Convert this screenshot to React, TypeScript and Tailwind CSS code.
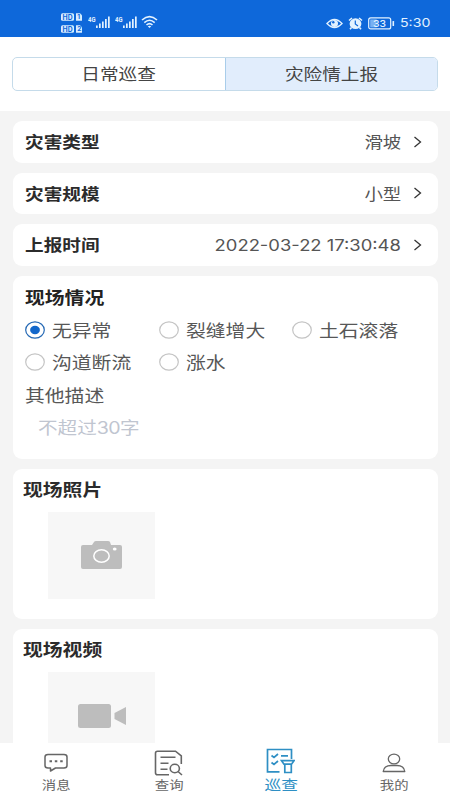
import type { ReactNode } from "react";

function Wide({ children, className = "" }: { children: ReactNode; className?: string }) {
  return <span className={`inline-block whitespace-nowrap scale-x-[1.18] ${className}`}>{children}</span>;
}

function SignalBars() {
  return (
    <svg width="23" height="14" viewBox="0 0 23 14" fill="#e3f2ff">
      <text x="0" y="6.5" fontSize="7" fontWeight="700" fontFamily="Roboto, sans-serif" textLength="7.5" lengthAdjust="spacingAndGlyphs">4G</text>
      <rect x="8" y="10.5" width="1.7" height="2.5" />
      <rect x="11" y="8.5" width="1.7" height="4.5" />
      <rect x="14" y="6.5" width="1.7" height="6.5" />
      <rect x="17" y="4" width="1.7" height="9" />
      <rect x="20" y="1.5" width="1.7" height="11.5" />
    </svg>
  );
}

function HdBadge({ n }: { n: string }) {
  return (
    <svg width="22" height="8" viewBox="0 0 22 8">
      <rect x="0" y="0.3" width="13" height="7.4" rx="1.5" fill="#d9edff" />
      <text x="1.6" y="6.5" fontSize="7" fontWeight="700" fill="#0e68da" textLength="10" lengthAdjust="spacingAndGlyphs">HD</text>
      <path d="M15 .3h4l2 2v5.4h-6z" fill="#d9edff" />
      <text x="16.2" y="6.3" fontSize="6.5" fontWeight="700" fill="#0e68da">{n}</text>
    </svg>
  );
}

function StatusBar() {
  return (
    <header className="flex h-[37px] shrink-0 items-start justify-between bg-[#0e68da] pr-[25.5px] pl-[61px] text-[#e3f2ff]">
      <div className="flex">
        <div className="mt-[13px] flex flex-col gap-1">
          <HdBadge n="1" />
          <HdBadge n="2" />
        </div>
        <div className="mt-[15px] ml-[5px] flex gap-1">
          <SignalBars />
          <SignalBars />
        </div>
        <svg className="mt-[15px] ml-[3px]" width="17" height="14" viewBox="0 0 17 14" fill="none" stroke="#e3f2ff" strokeWidth="1.6">
          <path d="M1 5Q8.500-1.700 16 5M3.300 7.600Q8.500 2.900 13.700 7.600M5.500 10Q8.500 7.300 11.500 10" />
          <path d="M6.800 11.300Q8.500 10 10.200 11.300L8.500 13z" fill="#e3f2ff" stroke="none" />
        </svg>
      </div>
      <div className="mt-[15px] flex h-4 items-center">
        <svg width="17" height="11" viewBox="0 0 17 11">
          <path d="M1 5.500Q8.500-2.500 16 5.500Q8.500 13.500 1 5.500Z" fill="none" stroke="#e3f2ff" strokeWidth="1.400" />
          <circle cx="8.500" cy="5.500" r="3.500" fill="#e3f2ff" />
          <circle cx="7.300" cy="4.300" r="1.200" fill="#0e68da" />
        </svg>
        <svg className="ml-[5px]" width="15" height="13" viewBox="0 0 15 13">
          <ellipse cx="7.500" cy="6.700" rx="5.900" ry="5.400" fill="#e3f2ff" />
          <path d="M1 3.500 4 1M14 3.500 11 1M3.500 10.500 2 12.300M11.500 10.500 13 12.300" stroke="#e3f2ff" strokeWidth="1.600" />
          <path d="M7.300 3.500v3.500l2.700 2" fill="none" stroke="#0e68da" strokeWidth="1.200" />
        </svg>
        <svg className="ml-[5px]" width="27" height="13" viewBox="0 0 27 13">
          <rect x=".7" y=".9" width="22" height="11" rx="2" fill="none" stroke="#e3f2ff" strokeWidth="1.200" />
          <rect x="2.200" y="2.400" width="6.500" height="8" fill="#78b1f2" />
          <rect x="24.500" y="4" width="1.600" height="5" rx=".5" fill="#e3f2ff" />
          <text x="5" y="10" fontSize="9.500" fontWeight="500" fill="#e3f2ff" textLength="13" lengthAdjust="spacingAndGlyphs">33</text>
        </svg>
        <Wide className="ml-[5px] w-[25px] origin-left text-[12px] leading-4">5:30</Wide>
      </div>
    </header>
  );
}

function SelectRow({ label, value }: { label: string; value: string }) {
  return (
    <div className="flex h-[41.500px] shrink-0 items-center rounded-[9px] bg-white pr-[15.5px] pl-[12.5px]">
      <Wide className="mt-[3px] origin-left text-[15.8px] font-bold text-[#2b2b2b]">{label}</Wide>
      <Wide className="mt-[2px] ml-auto origin-right text-[15.6px] text-[#555]">{value}</Wide>
      <svg className="ml-[12px]" width="9" height="12" viewBox="0 0 9 12" fill="none" stroke="#333" strokeWidth="1.300">
        <path d="m1.500 1 6 5-6 5" />
      </svg>
    </div>
  );
}

function Option({ label, checked = false }: { label: string; checked?: boolean }) {
  return (
    <div className="flex h-[32.5px] items-center">
      <svg width="20" height="18" viewBox="0 0 20 18">
        <ellipse cx="10" cy="9" rx="9.300" ry="8.100" fill="#fff" stroke={checked ? "#2468b4" : "#c4c4c4"} strokeWidth="1.200" />
        {checked && <ellipse cx="10" cy="9" rx="4.900" ry="4.200" fill="#1267cb" />}
      </svg>
      <Wide className="mt-[3px] ml-[7px] origin-left text-[16.8px] text-[#575757]">{label}</Wide>
    </div>
  );
}

function NavItem({ label, active = false, children }: { label: string; active?: boolean; children: ReactNode }) {
  return (
    <div className={`flex flex-1 flex-col items-center ${active ? "text-[#2e8fc4]" : "text-[#666]"}`}>
      <div className="flex h-[33px] items-end">{children}</div>
      <Wide className={active ? "text-[14.2px] leading-[18px]" : "mt-px text-[12.2px] leading-[18px]"}>{label}</Wide>
    </div>
  );
}

export default function App() {
  return (
    <div className="flex h-[800px] w-[450px] flex-col overflow-hidden bg-[#f4f4f4] font-['Inter','Noto_Sans_CJK_SC',sans-serif]">
      <StatusBar />
      <div className="h-[74px] shrink-0 bg-white px-[12px] pt-5">
        <div className="flex h-[33.5px] overflow-hidden rounded-[5px] border border-[#c5dbea] text-[15.8px] text-[#444]">
          <div className="flex flex-1 items-center justify-center border-r border-[#a9cdea] pt-0.5"><Wide>日常巡查</Wide></div>
          <div className="flex flex-1 items-center justify-center bg-[#e1edfc] pt-0.5"><Wide>灾险情上报</Wide></div>
        </div>
      </div>
      <main className="flex min-h-0 flex-1 flex-col gap-[10px] overflow-hidden px-[12.5px] pt-[10px]">
        <SelectRow label="灾害类型" value="滑坡" />
        <SelectRow label="灾害规模" value="小型" />
        <SelectRow label="上报时间" value="2022-03-22 17:30:48" />
        <section className="h-[183px] shrink-0 rounded-[9px] bg-white px-[12.5px] pt-[10px]">
          <h2 className="h-[28px] text-[16.8px] leading-[25px] font-bold text-[#222]"><Wide className="origin-left">现场情况</Wide></h2>
          <div className="grid grid-cols-[133.5px_133px_1fr]">
            <Option label="无异常" checked />
            <Option label="裂缝增大" />
            <Option label="土石滚落" />
            <Option label="沟道断流" />
            <Option label="涨水" />
          </div>
          <div className="h-[33px] text-[16.8px] leading-[34px] text-[#575757]"><Wide className="origin-left">其他描述</Wide></div>
          <div className="pl-[12.5px] text-[16.6px] leading-[32px] text-[#c0c5d0]"><Wide className="origin-left">不超过<span className="tracking-[-0.5px]">30</span>字</Wide></div>
        </section>
        <section className="h-[150.500px] shrink-0 rounded-[9px] bg-white px-[10.5px] pt-[8.5px]">
          <h2 className="h-[34.5px] text-[16.8px] leading-[26px] font-bold text-[#2b2b2b]"><Wide className="origin-left">现场照片</Wide></h2>
          <div className="ml-[25px] flex h-[87px] w-[107px] items-center justify-center bg-[#f7f7f7]">
            <svg width="41" height="28" viewBox="0 0 41 28">
              <path d="M2 4h9l2-3q.5-1 2-1h12q1.500 0 2 1l1 3h9q2 0 2 2v20q0 2-2 2H2q-2 0-2-2V6q0-2 2-2Z" fill="#bdbdbd" />
              <ellipse cx="20.500" cy="15" rx="7.700" ry="6.300" fill="none" stroke="#fff" strokeWidth="1.500" />
              <ellipse cx="33.700" cy="8" rx="1.900" ry="1.600" fill="#fff" />
            </svg>
          </div>
        </section>
        <section className="h-[150px] shrink-0 rounded-[9px] bg-white px-[10.5px] pt-[8.5px]">
          <h2 className="h-[34.5px] text-[16.8px] leading-[25px] font-bold text-[#2b2b2b]"><Wide className="origin-left">现场视频</Wide></h2>
          <div className="ml-[25px] flex h-[87px] w-[107px] items-center justify-center bg-[#f7f7f7]">
            <svg width="48" height="24" viewBox="0 0 48 24" fill="#bdbdbd">
              <rect width="33" height="24" rx="2.500" />
              <path d="M36.500 9 48 3v18L36.500 15z" />
            </svg>
          </div>
        </section>
      </main>
      <nav className="flex h-[57px] shrink-0 bg-white">
        <NavItem label="消息">
          <svg className="mb-[3px]" width="24" height="20" viewBox="0 0 24 20" fill="none" stroke="currentColor" strokeWidth="1.500">
            <path d="M4 1.500h16q3 0 3 2.500v8.500q0 2.500-3 2.500h-8.500L6.500 18v-3H4q-3 0-3-2.500V4q0-2.500 3-2.500Z" strokeLinejoin="round" />
            <path d="M5.500 8.300H8M10.800 8.300h2.500M16.200 8.300h2.500" strokeWidth="2" />
          </svg>
        </NavItem>
        <NavItem label="查询">
          <svg width="29" height="26" viewBox="0 0 29 26" fill="none" stroke="currentColor" strokeWidth="1.600">
            <path d="M15 24.700H3.500Q1.500 24.700 1.500 22.700V3.200Q1.500 1.200 3.500 1.200H21.500L27.300 6v8" />
            <path d="M6.500 7.200h15M6.500 13.200h8M6.500 19.200h7" />
            <ellipse cx="20.800" cy="18.500" rx="4.600" ry="4.200" />
            <path d="m24 21.500 4 3.500" />
          </svg>
        </NavItem>
        <NavItem label="巡查" active>
          <svg className="mr-[2px] mb-[2px]" width="29" height="26" viewBox="0 0 29 26" fill="none" stroke="currentColor" strokeWidth="1.700">
            <path d="M13.500 23.800H1.500V1.500H25.500V11" />
            <path d="m5.500 7.500 2.500 2 4-3.500M15 7.800h7M5.500 14.500l2.500 2 4-3.500" />
            <path d="M15.500 12.700h12.500l-2.500 3.500h-7.500zM18.800 16.500v8h6.500v-8" />
          </svg>
        </NavItem>
        <NavItem label="我的">
          <svg className="mb-[3px]" width="24" height="20" viewBox="0 0 24 20" fill="none" stroke="currentColor" strokeWidth="1.300">
            <ellipse cx="12" cy="6" rx="5.700" ry="4.900" />
            <path d="M1.200 18.500Q2 12.500 9 12.500h6q7 0 7.800 6Z" strokeLinejoin="round" />
          </svg>
        </NavItem>
      </nav>
    </div>
  );
}
